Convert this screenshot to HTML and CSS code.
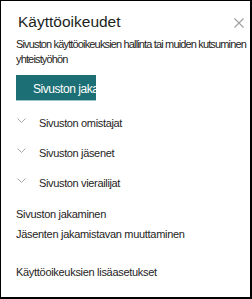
FILE: index.html
```html
<!DOCTYPE html>
<html lang="fi">
<head>
  <meta charset="UTF-8">
  <meta name="viewport" content="width=device-width, initial-scale=1.0">
  <title>Käyttöoikeudet</title>
  <link rel="stylesheet" href="styles.css">
</head>
<body>
  <div class="panel">
    <header class="panel-header">
      <h1>Käyttöoikeudet</h1>
      <button class="close" aria-label="Sulje">
        <svg width="10" height="10" viewBox="0 0 10 10">
          <path d="M0.5 0.5 L9.5 9.5 M9.5 0.5 L0.5 9.5" stroke="#a19f9d" stroke-width="1.1" fill="none"/>
        </svg>
      </button>
    </header>

    <p class="intro">Sivuston käyttöoikeuksien hallinta tai muiden kutsuminen yhteistyöhön</p>

    <button class="share-button">Sivuston jakaminen</button>

    <ul class="groups">
      <li>
        <svg class="chevron" width="9" height="5" viewBox="0 0 9 5">
          <path d="M0.5 0.5 L4.5 4.5 L8.5 0.5" stroke="#a6a6a6" stroke-width="1" fill="none"/>
        </svg>
        <span>Sivuston omistajat</span>
      </li>
      <li>
        <svg class="chevron" width="9" height="5" viewBox="0 0 9 5">
          <path d="M0.5 0.5 L4.5 4.5 L8.5 0.5" stroke="#a6a6a6" stroke-width="1" fill="none"/>
        </svg>
        <span>Sivuston jäsenet</span>
      </li>
      <li>
        <svg class="chevron" width="9" height="5" viewBox="0 0 9 5">
          <path d="M0.5 0.5 L4.5 4.5 L8.5 0.5" stroke="#a6a6a6" stroke-width="1" fill="none"/>
        </svg>
        <span>Sivuston vierailijat</span>
      </li>
    </ul>

    <div class="links">
      <a href="#">Sivuston jakaminen</a>
      <a href="#">Jäsenten jakamistavan muuttaminen</a>
      <a href="#" class="advanced">Käyttöoikeuksien lisäasetukset</a>
    </div>
  </div>
</body>
</html>
```

FILE: styles.css
```css
html, body {
  margin: 0;
  padding: 0;
}

body {
  font-family: "Liberation Sans Narrow", "Arial Narrow", "Liberation Sans", Arial, sans-serif;
  color: #252423;
  background-color: white;
}

.panel {
  box-sizing: border-box;
  width: 252px;
  height: 299px;
  border-style: solid;
  border-color: #000;
  border-width: 1px 2px 2px 1px;
  padding: 11px 0 0 15px;
  display: flex;
  flex-direction: column;
  align-items: flex-start;
}

.panel-header {
  display: flex;
  align-items: center;
  justify-content: space-between;
  width: 100%;
}

h1 {
  margin: 0 0 0 2px;
  font-size: 15.5px;
  font-weight: normal;
  line-height: 20px;
  color: #201f1e;
}

.close {
  background: none;
  border: none;
  padding: 0;
  margin: 2px 6px 0 0;
  display: flex;
}

.intro {
  margin: 5px 0 0 0;
  font-size: 11px;
  line-height: 15px;
  letter-spacing: -0.85px;
}

.share-button {
  box-sizing: border-box;
  width: 80px;
  height: 26px;
  margin-top: 8px;
  padding: 3px 0 0 17px;
  overflow: hidden;
  white-space: nowrap;
  text-align: left;
  font-family: inherit;
  font-size: 12px;
  line-height: 22px;
  letter-spacing: -0.45px;
  color: white;
  background-color: #1c6f74;
  border: none;
  border-bottom: 1px solid #9cc4c6;
}

.groups {
  list-style: none;
  margin: 7px 0 0 0;
  padding: 0;
}

.groups li {
  display: flex;
  align-items: flex-start;
  height: 30px;
  font-size: 11px;
  line-height: 30px;
  letter-spacing: -0.35px;
}

.chevron {
  margin: 10px 13px 0 1px;
}

.links {
  display: flex;
  flex-direction: column;
  margin-top: 6px;
}

.links a {
  font-size: 11px;
  line-height: 20px;
  letter-spacing: -0.3px;
  color: #252423;
  text-decoration: none;
}

.links a.advanced {
  margin-top: 18px;
}
```
